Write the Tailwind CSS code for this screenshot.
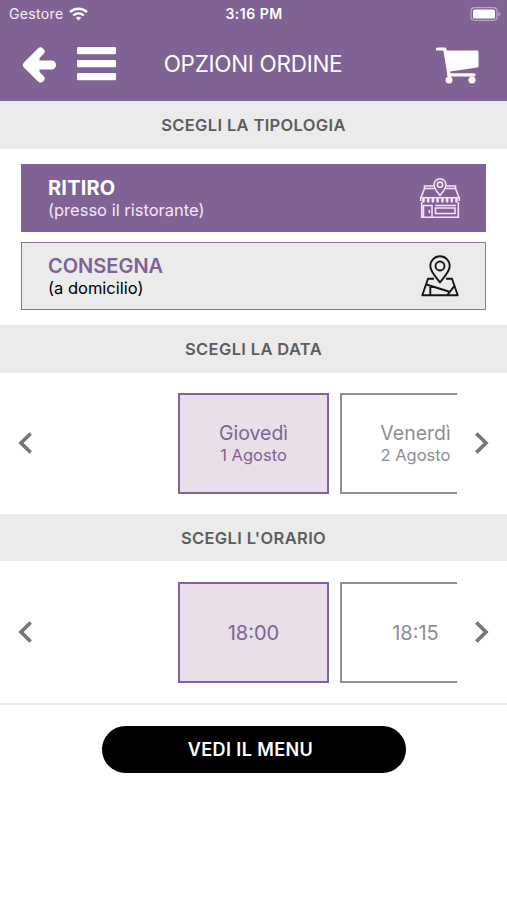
<!DOCTYPE html>
<html lang="it">
  <head>
    <meta charset="UTF-8" />
    <meta name="viewport" content="width=device-width, initial-scale=1.0" />
    <title>Opzioni ordine</title>
    <script src="https://cdn.jsdelivr.net/npm/@tailwindcss/browser@4"></script>
  </head>

  <body class="min-h-screen overflow-hidden bg-white font-['Inter',sans-serif]">
    <!-- Header -->
    <header class="h-[101px] bg-[#806295] text-white">
      <div class="grid h-[27px] grid-cols-3 items-center pl-[9px] pr-[6px]">
        <div class="flex items-center gap-[5px]">
          <span class="text-[14px] tracking-[0.35px] text-white/90">Gestore</span>
          <svg class="h-[14px] w-[19px]" viewBox="0 0 19 14" fill="none" stroke="currentColor" stroke-width="2.3">
            <path d="M1 5.2C5.8.6 13.2.6 18 5.2" />
            <path d="M4.2 8.5c3-2.8 7.6-2.8 10.6 0" />
            <path d="M9.5 13.6 6.7 10.8c1.6-1.5 4-1.5 5.6 0z" fill="currentColor" stroke="none" />
          </svg>
        </div>
        <span class="pr-[2px] text-center text-[14px] font-semibold tracking-[0.5px]">3:16 PM</span>
        <svg class="h-[14px] w-[31px] justify-self-end" viewBox="0 0 31 14">
          <rect x="1" y=".7" width="26" height="12.6" rx="3.5" fill="none" stroke="#b9a6c6" stroke-width="1.2" />
          <rect x="3" y="2.5" width="22" height="9" rx="1.5" fill="#fff" />
          <path d="M28.3 4.5 30.8 7l-2.5 2.5z" fill="#b9a6c6" />
        </svg>
      </div>

      <div class="grid h-[74px] grid-cols-[140px_1fr_140px] items-center">
        <div class="flex items-center gap-[20px] pl-[22px]">
          <svg class="mt-[2px] h-[38px] w-[35px]" viewBox="0 0 35 38" fill="none" stroke="currentColor" stroke-linecap="round" stroke-linejoin="round">
            <path d="M18.5 5.500 5 19l13.500 13.500" stroke-width="8" />
            <path d="M8 19h21.500" stroke-width="9" />
            <path d="M16 10v18L6 19z" fill="currentColor" stroke-width="3" />
          </svg>
          <svg class="h-[34px] w-[40px]" viewBox="0 0 40 34" fill="currentColor">
            <rect x="0" y="0" width="39" height="7.200" rx="1.300" />
            <rect x="0" y="13" width="39" height="7.200" rx="1.300" />
            <rect x="0" y="26" width="39" height="7.200" rx="1.300" />
          </svg>
        </div>
        <h1 class="pr-px text-center text-[22.500px] font-normal tracking-[-0.3px] whitespace-nowrap">OPZIONI ORDINE</h1>
        <svg class="mt-[2px] mr-[28px] h-[37px] w-[43px] justify-self-end" viewBox="0 0 43 37">
          <path d="M1.500 2h7.200l4.600 27.500M12.500 27.800h25.500" fill="none" stroke="#fff" stroke-width="3.200" stroke-linecap="round" stroke-linejoin="round" />
          <path d="M9.500 3.500h31.500q1.500 0 1.500 1.500v14q0 1.200-1.300 1.400L14 24.500z" fill="#fff" />
          <circle cx="13" cy="33" r="3.500" fill="#fff" />
          <circle cx="36" cy="33" r="3.500" fill="#fff" />
        </svg>
      </div>
    </header>

    <main>
      <!-- Tipologia -->
      <h2 class="flex h-[48px] items-center justify-center bg-[#ebebeb] text-[16.500px] font-semibold tracking-[0.35px] text-[#5d5d60]">SCEGLI LA TIPOLOGIA</h2>
      <div class="flex h-[176px] flex-col gap-[10px] px-[21px] pt-[15px]">
        <button class="flex h-[68px] items-center justify-between border border-[#806295] bg-[#806295] pr-[24px] pl-[26px] text-left text-white">
          <span>
            <span class="block text-[20px] leading-[24px] font-bold tracking-[0.2px]">RITIRO</span>
            <span class="block text-[16.500px] leading-[21px] text-[#f6e6fa]">(presso il ristorante)</span>
          </span>
          <svg class="h-[42px] w-[42px]" viewBox="0 0 42 42" fill="none" stroke="#f3e3f8" stroke-width="1.600">
            <path d="M15 11.500H5.500L2 20.500M27 11.500h9.500L40 20.500" />
            <path d="M5.500 11.500V9h9M27.500 9h9v2.500" />
            <path d="M21 18.500c-3.700-4.500-6-7-6-10.800a6 6 0 0 1 12 0c0 3.800-2.300 6.300-6 10.800z" />
            <circle cx="21" cy="7.700" r="2.600" />
            <path d="M1 20.800h40" />
            <path d="M1.700 20.500v3.500M40.300 20.500v3.500" />
            <path d="M4.500 22v2.300M9.200 22v2.300M13.900 22v2.300M18.600 22v2.300M23.400 22v2.300M28.100 22v2.300M32.800 22v2.300M37.500 22v2.300" stroke-width="2.700" stroke-linecap="round" />
            <path d="M2.700 25v15.200h36.600V25M4.500 40V28.500h8.500V40M10.300 33v3M16 28.500h21M16.500 31h19.500v5.500h-19.500z" />
          </svg>
        </button>
        <button class="flex h-[68px] items-center justify-between border border-[#8d72a2] bg-[#ebebeb] pr-[26px] pl-[26px] text-left text-black">
          <span>
            <span class="block text-[20px] leading-[24px] font-semibold text-[#806295]">CONSEGNA</span>
            <span class="block text-[16.500px] leading-[21px]">(a domicilio)</span>
          </span>
          <svg class="h-[42px] w-[38px]" viewBox="0 0 38 42" fill="none" stroke="#161616" stroke-width="1.900" stroke-linejoin="round">
            <path d="M19 27.500C14 21 9.300 16.500 9.300 11a9.700 9.700 0 0 1 19.400 0c0 5.500-4.700 10-9.700 16.500z" />
            <circle cx="19" cy="11" r="4.500" />
            <path d="M13 23.700H7L1.300 40.300h35.400L31 23.700h-6M5.300 29.500l22.500 7M9.300 31v9M26 40.300l7.500-9.500" />
          </svg>
        </button>
      </div>

      <!-- Data -->
      <h2 class="flex h-[48px] items-center justify-center bg-[#ebebeb] text-[16.500px] font-semibold tracking-[0.35px] text-[#5d5d60]">SCEGLI LA DATA</h2>
      <div class="flex h-[141px] items-center">
        <button class="flex w-[50px] justify-center pb-[2px]">
          <svg class="h-[24px] w-[16px]" viewBox="0 0 16 24" fill="none" stroke="#777" stroke-width="3.700"><path d="M13.700 2.500 4 12l9.700 9.500" /></svg>
        </button>
        <div class="flex flex-1 gap-[11px] overflow-hidden pl-[128px]">
          <div class="flex h-[101px] w-[151px] shrink-0 flex-col items-center justify-center border-2 border-[#8063a0] bg-[#e8dfe9] text-[#806295]">
            <span class="text-[19.500px] leading-[24px]">Giovedì</span>
            <span class="text-[16.500px] leading-[21px]">1 Agosto</span>
          </div>
          <div class="flex h-[101px] w-[151px] shrink-0 flex-col items-center justify-center border-2 border-[#8f8f8f] text-[#8e8e90]">
            <span class="text-[19.500px] leading-[24px]">Venerdì</span>
            <span class="text-[16.500px] leading-[21px]">2 Agosto</span>
          </div>
        </div>
        <button class="flex w-[50px] justify-center pb-[2px]">
          <svg class="h-[24px] w-[16px]" viewBox="0 0 16 24" fill="none" stroke="#777" stroke-width="3.700"><path d="M2.300 2.500 12 12l-9.700 9.500" /></svg>
        </button>
      </div>

      <!-- Orario -->
      <h2 class="flex h-[47px] items-center justify-center bg-[#ebebeb] pt-px text-[16.500px] font-semibold tracking-[0.35px] text-[#5d5d60]">SCEGLI L'ORARIO</h2>
      <div class="flex h-[142px] items-center">
        <button class="flex w-[50px] justify-center">
          <svg class="h-[24px] w-[16px]" viewBox="0 0 16 24" fill="none" stroke="#777" stroke-width="3.700"><path d="M13.700 2.500 4 12l9.700 9.500" /></svg>
        </button>
        <div class="flex flex-1 gap-[11px] overflow-hidden pl-[128px]">
          <div class="flex h-[101px] w-[151px] shrink-0 items-center justify-center border-2 border-[#8063a0] bg-[#e8dfe9] pt-px text-[20px] text-[#806295]">18:00</div>
          <div class="flex h-[101px] w-[151px] shrink-0 items-center justify-center border-2 border-[#8f8f8f] pt-px text-[20px] text-[#8e8e90]">18:15</div>
        </div>
        <button class="flex w-[50px] justify-center">
          <svg class="h-[24px] w-[16px]" viewBox="0 0 16 24" fill="none" stroke="#777" stroke-width="3.700"><path d="M2.300 2.500 12 12l-9.700 9.500" /></svg>
        </button>
      </div>
    </main>

    <footer class="flex justify-center border-t-2 border-[#ececec] pt-[21px]">
      <button class="h-[47px] w-[304px] rounded-full bg-black pr-[6px] text-[18px] font-semibold tracking-[0.4px] text-white">VEDI IL MENU</button>
    </footer>
  </body>
</html>
